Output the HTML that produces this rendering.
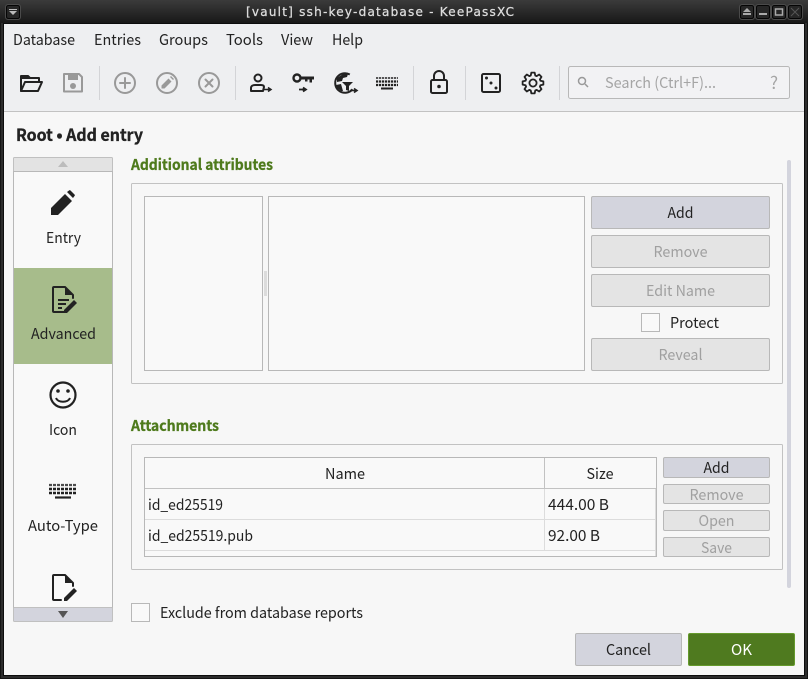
<!DOCTYPE html>
<html><head><meta charset="utf-8"><title>KeePassXC</title>
<style>
html,body{margin:0;padding:0;width:808px;height:679px;overflow:hidden;background:#111}
svg{display:block}
text{font-family:"Noto Sans CJK JP","Liberation Sans",sans-serif;font-size:15px;fill:#222}
.b{font-weight:700;stroke:#222;stroke-width:.35}
.g{font-weight:700;fill:#4e7a1c;stroke:#4e7a1c;stroke-width:.3}
.d{fill:#a0a0a0}
.btn{fill:#e4e4e4;stroke:#b8b8b8}
.btna{fill:#d3d4dd;stroke:#b8b8b8}
.box{fill:#f9f9f9;stroke:#b8b8b8}
.grp{fill:none;stroke:#c2c2c2}
.ic{fill:none;stroke:#222;stroke-width:2;stroke-linejoin:round;stroke-linecap:round}
.icd{fill:none;stroke:#999;stroke-width:2;stroke-linejoin:round;stroke-linecap:round}
.tbtn{fill:#262626;stroke:#050505;stroke-width:1}
</style></head><body>
<svg width="808" height="679" viewBox="0 0 808 679" xmlns="http://www.w3.org/2000/svg">
<defs><linearGradient id="tb" x1="0" y1="0" x2="0" y2="1"><stop offset="0" stop-color="#3b3b3b"/><stop offset="1" stop-color="#181818"/></linearGradient></defs>
<!-- frame -->
<rect x="0" y="0" width="808" height="679" fill="#141414"/>
<rect x="1" y="1" width="806" height="677" fill="#2c2c2c"/>
<rect x="3" y="3" width="802" height="673" fill="#0c0c0c"/>
<rect x="0" y="0" width="808" height="23" fill="url(#tb)"/>
<rect x="4" y="24" width="800" height="651" fill="#f7f7f7"/>
<rect x="4" y="24" width="800" height="87" fill="#eeeff1"/>
<rect x="4" y="111" width="800" height="1" fill="#c2c2c2"/>
<!-- title -->
<text x="246" y="16" textLength="268" lengthAdjust="spacing" style="font-family:'DejaVu Sans',sans-serif;font-size:12px;fill:#dedede;stroke:#dedede;stroke-width:.25">[vault] ssh-key-database - KeePassXC</text>
<g fill="none" stroke="#4a4a4a" stroke-width="1"><rect x="5.500" y="4.500" width="15" height="15" rx="2.500"/><rect x="739.500" y="4.500" width="15" height="15" rx="2.500"/><rect x="755.500" y="4.500" width="15" height="15" rx="2.500"/><rect x="771.500" y="4.500" width="15" height="15" rx="2.500"/><rect x="787.500" y="4.500" width="15" height="15" rx="2.500"/></g>
<rect class="tbtn" x="6.500" y="5.500" width="13" height="13" rx="2"/><rect class="tbtn" x="740.500" y="5.500" width="13" height="13" rx="2"/><rect class="tbtn" x="756.500" y="5.500" width="13" height="13" rx="2"/><rect class="tbtn" x="772.500" y="5.500" width="13" height="13" rx="2"/><rect class="tbtn" x="788.500" y="5.500" width="13" height="13" rx="2"/>
<path d="M9 9h8v1H9zM9 11h8l-4 4z" fill="#bbb"/>
<path d="M747 8l4 4h-8zM743 13h8v2h-8z" fill="#aaa"/>
<rect x="759" y="13" width="8" height="2" fill="#aaa"/>
<path d="M775.500 9h7v6h-7z" fill="none" stroke="#aaa" stroke-width="1.500"/>
<path d="M791 8l8 8M799 8l-8 8" stroke="#555" fill="none"/>
<!-- menu -->
<text x="13" y="45" textLength="62" lengthAdjust="spacingAndGlyphs">Database</text>
<text x="94" y="45" textLength="47" lengthAdjust="spacingAndGlyphs">Entries</text>
<text x="159" y="45" textLength="49" lengthAdjust="spacingAndGlyphs">Groups</text>
<text x="226" y="45" textLength="37" lengthAdjust="spacingAndGlyphs">Tools</text>
<text x="281" y="45" textLength="32" lengthAdjust="spacingAndGlyphs">View</text>
<text x="332" y="45" textLength="31" lengthAdjust="spacingAndGlyphs">Help</text>
<!-- toolbar separators -->
<g fill="#d3d4d7"><rect x="99" y="66" width="1" height="34"/><rect x="235" y="66" width="1" height="34"/><rect x="413" y="66" width="1" height="34"/><rect x="465" y="66" width="1" height="34"/><rect x="559" y="66" width="1" height="34"/></g>
<!-- folder -->
<path class="ic" d="M21 91V76h7l2 2h9v4" />
<path class="ic" d="M21 91h17l4-9H25l-4 9z"/>
<path d="M21 75h7l2 2h8v2H21z" fill="#222"/>
<!-- save -->
<path class="icd" d="M64 74h15l3 3v14.500H64z"/>
<rect x="68" y="75" width="10" height="5" fill="#999"/>
<circle cx="73" cy="86" r="3" fill="#999"/>
<!-- add/edit/delete -->
<circle class="icd" cx="125" cy="83" r="10"/><path class="icd" d="M125 78v10M120 83h10"/>
<circle class="icd" cx="167" cy="83" r="10"/><path d="M161.500 88.500v-3l7-7 3 3-7 7zM170 77l3 3 1-1-3-3z" fill="#999"/>
<circle class="icd" cx="209" cy="83" r="10"/><path class="icd" d="M205.500 79.500l7 7M212.500 79.500l-7 7"/>
<!-- user arrow -->
<circle class="ic" cx="258" cy="78" r="3.500"/>
<path class="ic" d="M251 91v-3c0-2 2-3 4-3h6c2 0 3 .500 3 2l-1 4z"/>
<path d="M264 89.500h6M268 87.500l3 2-3 2" fill="none" stroke="#222" stroke-width="1.500"/>
<!-- key -->
<circle cx="297" cy="78" r="3.500" fill="none" stroke="#222" stroke-width="2.400"/>
<path d="M300 76.500h14v3h-2v3h-2.500v-3h-2v2H305v-2h-5z" fill="#222"/>
<path d="M299 89.500h6M303 87.500l3 2-3 2" fill="none" stroke="#222" stroke-width="1.800"/>
<!-- globe -->
<circle cx="345" cy="83" r="9.800" fill="none" stroke="#222" stroke-width="2" stroke-dasharray="44 18" transform="rotate(40 345 83)"/>
<path d="M337 78l6-4h5l-1 3-4 1-1 3-5 1zM336 85l5-1 2 7h-2l-4-3z" fill="#222"/>
<path d="M342 82h11l-4 4v5l-3-1v-4z" fill="#222"/>
<path d="M350 90.500h6M354 88.500l3 2-3 2" fill="none" stroke="#222" stroke-width="1.600"/>
<!-- keyboard -->
<g fill="none" stroke="#222"><path d="M376 78h22" stroke-width="2" stroke-dasharray="2.200 .8" opacity=".75"/><path d="M376 81.500h22" stroke-width="2.200" stroke-dasharray="2.200 .8"/><path d="M376 85h22" stroke-width="2.200" stroke-dasharray="2.200 .8"/><path d="M381 88.500h12" stroke-width="2"/></g>
<!-- lock -->
<rect class="ic" x="431" y="80" width="16" height="13" rx="1.500"/>
<path class="ic" d="M434 80v-4a5 5 0 0 1 10 0v4"/>
<circle cx="439" cy="86.500" r="1.800" fill="#222"/>
<!-- dice -->
<rect class="ic" x="482" y="74" width="18" height="18" rx="1.500"/>
<circle cx="486.500" cy="78" r="1.500" fill="#222"/><circle cx="491" cy="83" r="1.500" fill="#222"/><circle cx="496" cy="88" r="1.500" fill="#222"/>
<!-- gear -->
<g transform="translate(533 83)" fill="none" stroke="#222" stroke-width="1.800" stroke-linejoin="round">
<path d="M-2.280-7.460L-1.640-10.370L1.640-10.370L2.280-7.460L3.660-6.890L6.170-8.490L8.490-6.170L6.890-3.660L7.460-2.280L10.370-1.640L10.370 1.640L7.460 2.280L6.890 3.660L8.490 6.170L6.170 8.490L3.660 6.890L2.280 7.460L1.640 10.370L-1.640 10.370L-2.280 7.460L-3.660 6.890L-6.170 8.490L-8.490 6.170L-6.890 3.660L-7.460 2.280L-10.370 1.640L-10.370-1.640L-7.460-2.280L-6.890-3.660L-8.490-6.170L-6.170-8.490L-3.660-6.890Z"/>
<circle r="3.600"/>
</g>
<!-- search -->
<rect x="568.500" y="66.500" width="221" height="32" rx="2" fill="#f2f2f4" stroke="#b8b8b8"/>
<circle cx="582" cy="81" r="3.500" fill="none" stroke="#999" stroke-width="1.500"/><path d="M585 84l3 3" stroke="#999" stroke-width="1.500"/>
<text x="605" y="88" textLength="111" lengthAdjust="spacingAndGlyphs" style="fill:#a5a5a5">Search (Ctrl+F)...</text>
<text x="770" y="89" style="fill:#a5a5a5;font-size:17px">?</text>
<!-- heading -->
<text class="b" x="16" y="141" textLength="127" lengthAdjust="spacingAndGlyphs" style="font-size:16.500px">Root • Add entry</text>
<!-- sidebar -->
<rect x="13.500" y="157.500" width="99" height="14" rx="1" fill="#e3e3e3" stroke="#c0c0c0"/>
<path d="M58 167l5-6 5 6z" fill="#bcbcbc"/>
<rect x="13.500" y="171.500" width="99" height="436" class="box"/>
<rect x="14" y="268" width="98" height="96" fill="#a7bc8b"/>
<rect x="13.500" y="607.500" width="99" height="14" rx="1" fill="#d3d4dd" stroke="#c0c0c0"/>
<path d="M58 611h10l-5 7z" fill="#555"/>
<!-- pen -->
<path d="M51 215v-7l14-14 7 7-14 14zM67 192l2-1.500c.5-.5 1-.5 1.500 0l4 4c.5.5.5 1 0 1.500l-1.500 2z" fill="#222"/>
<text x="46" y="243" textLength="35" lengthAdjust="spacingAndGlyphs">Entry</text>
<!-- advanced -->
<path class="ic" d="M65 287H54c-.7 0-1 .5-1 1v23c0 .5.300 1 1 1h10M65 287l8 8v3"/>
<path d="M65 287l8 8h-8z" fill="#222"/>
<path d="M58 300h11M58 304h8M58 308h4" stroke="#222" stroke-width="2"/>
<path d="M64 313v-3l10-10 3 3-10 10z" fill="#222"/>
<text x="31" y="339" textLength="65" lengthAdjust="spacingAndGlyphs">Advanced</text>
<!-- smile -->
<circle cx="63" cy="395" r="12.500" fill="none" stroke="#222" stroke-width="2.200"/>
<circle cx="58" cy="391" r="1.800" fill="#222"/><circle cx="68" cy="391" r="1.800" fill="#222"/>
<path d="M56 398c2 5 12 5 14 0" fill="none" stroke="#222" stroke-width="2"/>
<text x="49" y="435" textLength="28" lengthAdjust="spacingAndGlyphs">Icon</text>
<!-- keyboard big -->
<g fill="none" stroke="#222"><path d="M49 485h28" stroke-width="2.200" stroke-dasharray="3 1" opacity=".8"/><path d="M49 489h28" stroke-width="2.600" stroke-dasharray="3 1"/><path d="M49 493h28" stroke-width="2.600" stroke-dasharray="3 1"/><path d="M55 497.500h16" stroke-width="2.200"/></g>
<text x="28" y="531" textLength="70" lengthAdjust="spacingAndGlyphs">Auto-Type</text>
<!-- doc -->
<path class="ic" d="M65 575H54c-.7 0-1 .5-1 1v23c0 .5.300 1 1 1h7M65 575l8 8v3"/>
<path d="M65 575l8 8h-8z" fill="#222"/>
<path d="M64 601v-3l10-10 3 3-10 10z" fill="#222"/>
<!-- additional attributes -->
<text class="g" x="131" y="170" textLength="142" lengthAdjust="spacingAndGlyphs">Additional attributes</text>
<rect class="grp" x="131.500" y="183.500" width="651" height="200" rx="1"/>
<rect class="box" x="144.500" y="196.500" width="118" height="174"/>
<rect class="box" x="268.500" y="196.500" width="316" height="174"/>
<rect x="264" y="271" width="3" height="25" fill="#dcdcdc"/>
<rect class="btna" x="591.500" y="196.500" width="178" height="32" rx="1.500"/>
<text x="680.500" y="218" text-anchor="middle" textLength="26" lengthAdjust="spacingAndGlyphs">Add</text>
<rect class="btn" x="591.500" y="235.500" width="178" height="32" rx="1.500"/>
<text class="d" x="680.500" y="257" text-anchor="middle" textLength="54" lengthAdjust="spacingAndGlyphs">Remove</text>
<rect class="btn" x="591.500" y="274.500" width="178" height="32" rx="1.500"/>
<text class="d" x="680.500" y="296" text-anchor="middle" textLength="69" lengthAdjust="spacingAndGlyphs">Edit Name</text>
<rect class="box" x="641.500" y="313.500" width="18" height="18"/>
<text x="670" y="328" textLength="49" lengthAdjust="spacingAndGlyphs">Protect</text>
<rect class="btn" x="591.500" y="338.500" width="178" height="32" rx="1.500"/>
<text class="d" x="680.500" y="360" text-anchor="middle" textLength="44" lengthAdjust="spacingAndGlyphs">Reveal</text>
<rect x="787" y="160" width="4" height="428" rx="2" fill="#d3d4dd"/>
<!-- attachments -->
<text class="g" x="131" y="431" textLength="88" lengthAdjust="spacingAndGlyphs">Attachments</text>
<rect class="grp" x="131.500" y="444.500" width="651" height="125" rx="1"/>
<rect class="box" x="144.500" y="457.500" width="512" height="99"/>
<path d="M145 488.500h511M544.500 458v30" stroke="#c2c2c2"/>
<path d="M145 519.500h510M145 550.500h510M544.500 489v62M655.500 489v67" stroke="#dcdcdc"/>
<text x="345" y="479" text-anchor="middle" textLength="40" lengthAdjust="spacingAndGlyphs">Name</text>
<text x="600" y="479" text-anchor="middle" textLength="27" lengthAdjust="spacingAndGlyphs">Size</text>
<text x="148" y="510" textLength="75" lengthAdjust="spacingAndGlyphs">id_ed25519</text>
<text x="148" y="541" textLength="105" lengthAdjust="spacingAndGlyphs">id_ed25519.pub</text>
<text x="548" y="510" textLength="61" lengthAdjust="spacingAndGlyphs">444.00 B</text>
<text x="548" y="541" textLength="52" lengthAdjust="spacingAndGlyphs">92.00 B</text>
<rect class="btna" x="663.500" y="457.500" width="106" height="20" rx="1.500"/>
<text x="716.500" y="473" text-anchor="middle" textLength="26" lengthAdjust="spacingAndGlyphs">Add</text>
<rect class="btn" x="663.500" y="484.500" width="106" height="19" rx="1.500"/>
<text class="d" x="716.500" y="500" text-anchor="middle" textLength="54" lengthAdjust="spacingAndGlyphs">Remove</text>
<rect class="btn" x="663.500" y="510.500" width="106" height="20" rx="1.500"/>
<text class="d" x="716.500" y="526" text-anchor="middle" textLength="36" lengthAdjust="spacingAndGlyphs">Open</text>
<rect class="btn" x="663.500" y="537.500" width="106" height="19" rx="1.500"/>
<text class="d" x="716.500" y="553" text-anchor="middle" textLength="31" lengthAdjust="spacingAndGlyphs">Save</text>
<!-- footer -->
<rect class="box" x="131.500" y="603.500" width="18" height="18"/>
<text x="160" y="618" textLength="203" lengthAdjust="spacingAndGlyphs">Exclude from database reports</text>
<rect class="btna" x="575.500" y="633.500" width="106" height="32" rx="1.500"/>
<text x="628.500" y="655" text-anchor="middle" textLength="45" lengthAdjust="spacingAndGlyphs">Cancel</text>
<rect x="688.500" y="633.500" width="106" height="32" rx="1.500" fill="#4f7a1f" stroke="#659a2c"/>
<text x="741.500" y="655" text-anchor="middle" textLength="21" lengthAdjust="spacingAndGlyphs" style="fill:#fff">OK</text>
</svg>
</body></html>
